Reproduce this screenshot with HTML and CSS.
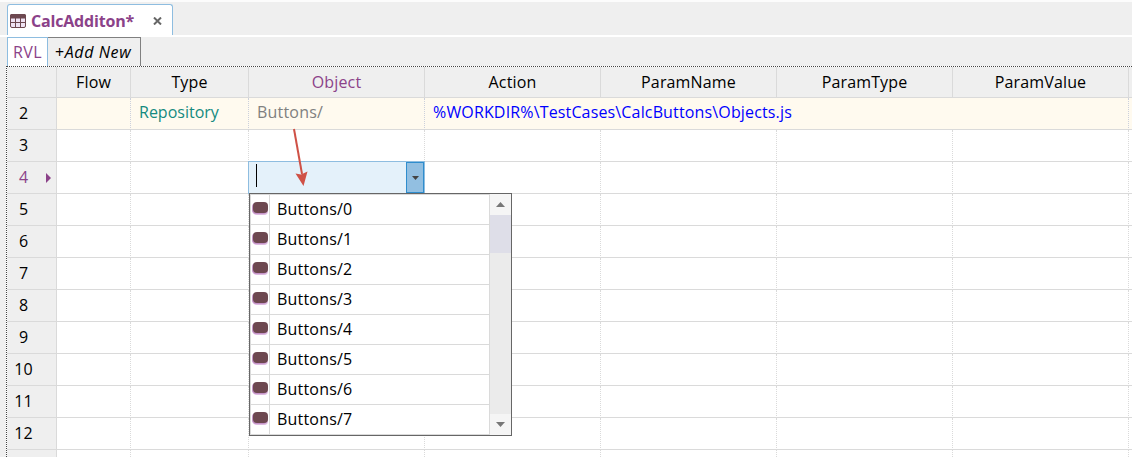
FILE: index.html
```html
<!DOCTYPE html>
<html lang="en">
<head>
<meta charset="utf-8">
<title>CalcAdditon</title>
<link rel="stylesheet" href="styles.css">
</head>
<body>
<div class="doc-tabs">
  <div class="doc-tab">
    <svg class="table-icon" width="16" height="14" viewBox="0 0 16 14"><rect x=".5" y=".5" width="15" height="13" rx="1.5" fill="#efe3f3" stroke="#6d4850"/><path d="M0 4.500V1.500Q0 0 1.500 0h13Q16 0 16 1.500v3z" fill="#6d4850"/><path d="M1 8.500h14M5.500 4v9M10.500 4v9" stroke="#6d4850" fill="none"/></svg>
    <span class="doc-title">CalcAdditon*</span>
    <svg class="close" width="9" height="8" viewBox="0 0 9 8"><path d="M1 .5l7 7M8 .5l-7 7" stroke="#666" stroke-width="2"/></svg>
  </div>
</div>
<div class="sheet-tabs">
  <div class="sheet active"><span>RVL</span></div>
  <div class="sheet add"><span>+<i>Add New</i></span></div>
</div>
<div class="grid">
  <div class="row head"><div></div><div><span>Flow</span></div><div><span>Type</span></div><div class="accent"><span>Object</span></div><div><span>Action</span></div><div><span>ParamName</span></div><div><span>ParamType</span></div><div><span>ParamValue</span></div><div></div></div>
  <div class="row include"><div class="num">2</div><div></div><div class="repo"><span>Repository</span></div><div class="obj"><span>Buttons/</span></div><div class="path"><span>%WORKDIR%\TestCases\CalcButtons\Objects.js</span></div><div></div></div>
  <div class="row"><div class="num">3</div><div></div><div></div><div></div><div></div><div></div><div></div><div></div><div></div></div>
  <div class="row"><div class="num accent">4<svg class="marker" width="5" height="10" viewBox="0 0 5 10"><path d="M0 0l5 5-5 5z" fill="#8b4289"/></svg></div><div></div><div></div><div class="editing">
    <div class="editor"><i class="caret"></i><div class="drop"><svg width="7" height="4" viewBox="0 0 7 4"><path d="M0 0h7L3.500 4z" fill="#444"/></svg></div></div>
    <div class="menu">
      <div class="items">
        <div class="item"><b><i></i></b><span>Buttons/0</span></div>
        <div class="item"><b><i></i></b><span>Buttons/1</span></div>
        <div class="item"><b><i></i></b><span>Buttons/2</span></div>
        <div class="item"><b><i></i></b><span>Buttons/3</span></div>
        <div class="item"><b><i></i></b><span>Buttons/4</span></div>
        <div class="item"><b><i></i></b><span>Buttons/5</span></div>
        <div class="item"><b><i></i></b><span>Buttons/6</span></div>
        <div class="item"><b><i></i></b><span>Buttons/7</span></div>
      </div>
      <div class="scroll">
        <div class="btn"><svg width="9" height="5" viewBox="0 0 9 5"><path d="M0 5L4.500 0 9 5z" fill="#777"/></svg></div>
        <div class="thumb"></div>
        <div class="btn end"><svg width="9" height="5" viewBox="0 0 9 5"><path d="M0 0h9L4.500 5z" fill="#777"/></svg></div>
      </div>
    </div>
    <svg class="arrow" width="20" height="60" viewBox="0 0 20 60"><path d="M3 1L11 46" stroke="#cf5146" stroke-width="2"/><path d="M4.500 45.500l5.500 1 6.500-3L12.500 58z" fill="#cf5146"/></svg>
  </div><div></div><div></div><div></div><div></div><div></div></div>
  <div class="row"><div class="num">5</div><div></div><div></div><div></div><div></div><div></div><div></div><div></div><div></div></div>
  <div class="row"><div class="num">6</div><div></div><div></div><div></div><div></div><div></div><div></div><div></div><div></div></div>
  <div class="row"><div class="num">7</div><div></div><div></div><div></div><div></div><div></div><div></div><div></div><div></div></div>
  <div class="row"><div class="num">8</div><div></div><div></div><div></div><div></div><div></div><div></div><div></div><div></div></div>
  <div class="row"><div class="num">9</div><div></div><div></div><div></div><div></div><div></div><div></div><div></div><div></div></div>
  <div class="row"><div class="num">10</div><div></div><div></div><div></div><div></div><div></div><div></div><div></div><div></div></div>
  <div class="row"><div class="num">11</div><div></div><div></div><div></div><div></div><div></div><div></div><div></div><div></div></div>
  <div class="row"><div class="num">12</div><div></div><div></div><div></div><div></div><div></div><div></div><div></div><div></div></div>
  <div class="row last"><div></div><div></div><div></div><div></div><div></div><div></div><div></div><div></div><div></div></div>
</div>
</body>
</html>
```
FILE: styles.css
```css
* { box-sizing: border-box; }
html, body { height: 457px; overflow: hidden; }
body { margin: 0; background: #efefef; font: 16px/22px "Open Sans", "Noto Sans", sans-serif; color: #000; border-top: 2px solid #fcfcfc; }
svg { display: block; flex: none; }
span { white-space: nowrap; }
.accent { color: #8b4289; }

.doc-tabs { height: 35px; padding: 2px 0 0 7px; border-bottom: 2px solid #fff; }
.doc-tab { display: flex; align-items: center; width: 166px; height: 31px; padding: 2px 0 0 3px; background: #fff; border: 1px solid #8ebde0; border-bottom: 0; border-radius: 3px 3px 0 0; }
.table-icon { margin-right: 5px; margin-left: -1px; }
.doc-title { width: 103px; font-weight: 700; letter-spacing: -.18px; color: #8b4289; }
.close { margin-left: 19px; }

.sheet-tabs { display: flex; height: 29px; padding-left: 7px; }
.sheet { height: 29px; line-height: 28px; }
.active { width: 41px; padding-left: 5px; background: #fff; border: 1px solid #8ebde0; border-bottom: 0; color: #8b4289; letter-spacing: .4px; }
.add { width: 93px; padding-left: 7px; border: 1px solid #808080; border-width: 1px 1px 0 0; letter-spacing: .6px; }

.grid { width: 1126px; height: 391px; margin-left: 6px; border: 1px dotted #444; border-width: 1px 0 0 1px; background: #fff; }
.row { display: grid; grid-template-columns: 50px 74px 118px 176px 176px 176px 176px 176px 1fr; height: 32px; }
.row > div { border-right: 1px dotted #dadada; border-bottom: 1px solid #dadada; }
.row > div:first-child { border-right: 1px solid #dadada; background: #efefef; }
.row > div:last-child { border-right: 0; }
.row > .num { position: relative; padding-right: 16px; text-align: center; line-height: 31px; }
.marker { position: absolute; left: 39px; top: 11px; }
.head { height: 31px; }
.head > div { display: flex; justify-content: center; align-items: center; background: #efefef; border-right: 1px solid #dadada; letter-spacing: .15px; }
.include { grid-template-columns: 50px 74px 118px 176px 704px 1fr; line-height: 29px; }
.include > div { padding-left: 8px; background: #fffaef; border-right-color: #ccd0dc; }
.include > .num { padding-left: 0; }
.include > .num:first-child { line-height: 30px; }
.repo { color: #148a80; }
.obj { color: #808080; letter-spacing: .2px; }
.path { color: #0000ff; letter-spacing: .15px; }
.last { height: 7px; }
.last > div { border-bottom: 0; }

.row > .editing { position: relative; }
.editor { position: absolute; left: -1px; top: -1px; display: flex; justify-content: space-between; width: 177px; height: 33px; background: #e4f1fa; border: 1px solid #8ebde0; border-bottom: 0; }
.caret { width: 1px; height: 23px; margin: 2px 0 0 7px; background: #000; }
.drop { display: flex; align-items: center; justify-content: center; width: 18px; height: 31px; background: #92bfe1; border: 1px solid #2f8dcd; }
.menu { position: absolute; left: 0; top: 31px; z-index: 2; display: flex; width: 263px; height: 243px; background: #fff; border: 1px solid #666; }
.items { width: 240px; border: 1px solid #dadada; border-width: 1px 1px 0 1px; }
.item { display: flex; height: 30px; line-height: 29px; border-bottom: 1px solid #dadada; letter-spacing: .2px; }
.item b { width: 19px; padding: 7px 0 0 2px; border-right: 1px solid #dadada; }
.item i { display: block; width: 15px; height: 11px; border-radius: 4px; background: #6d4850; box-shadow: -1px 1px #c594c9, 0 2px #ddb9df; }
.item span { padding-left: 7px; }
.scroll { display: flex; flex-direction: column; width: 21px; background: #ebebeb; }
.btn { display: flex; align-items: center; justify-content: center; height: 21px; background: #f5f5f5; }
.thumb { height: 38px; background: #dedee8; }
.end { margin-top: auto; }
.arrow { position: absolute; left: 42px; top: -34px; z-index: 3; }
```
